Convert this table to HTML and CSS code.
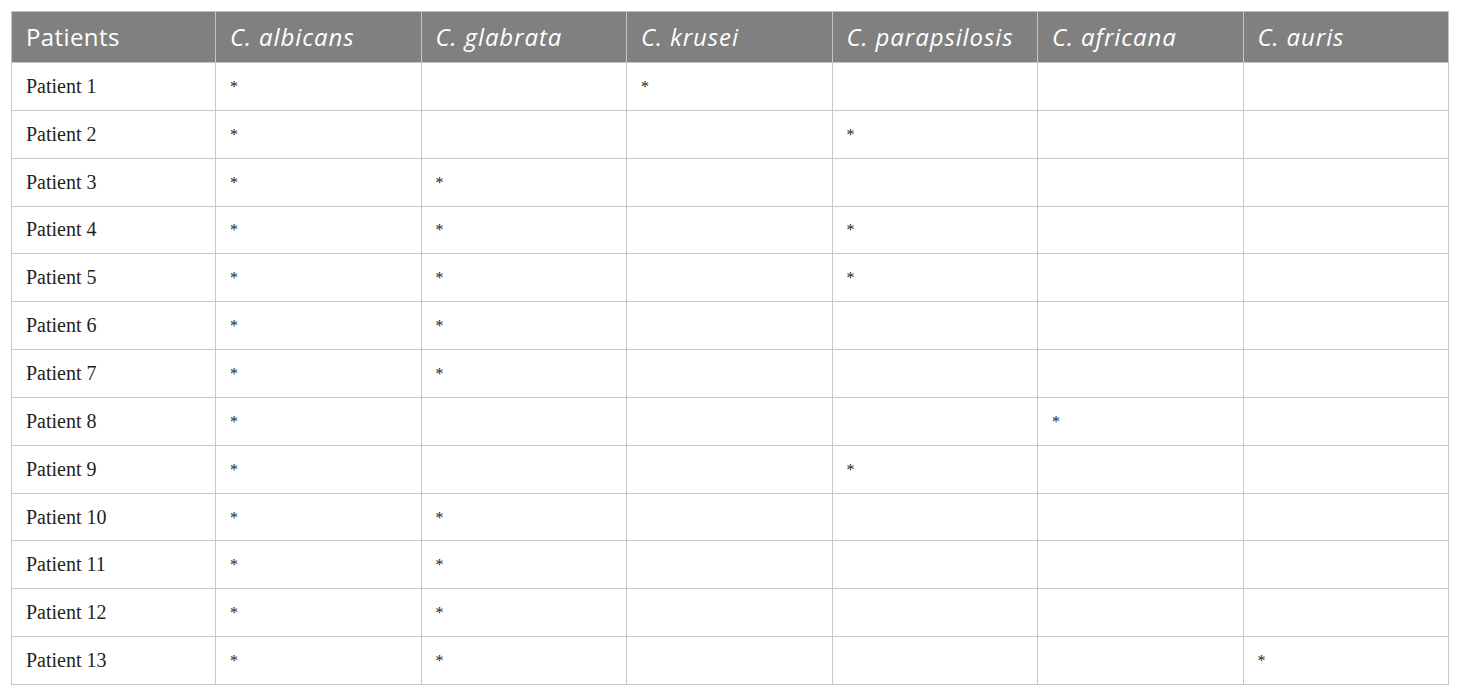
FILE: index.html
```html
<!DOCTYPE html>
<html>
<head>
<meta charset="utf-8">
<link rel="stylesheet" href="styles.css">
</head>
<body>
<table class="tbl">
<colgroup>
<col class="c1"><col class="c"><col class="c"><col class="c"><col class="c"><col class="c"><col class="c">
</colgroup>
<thead>
<tr><th>Patients</th><th><i>C. albicans</i></th><th><i>C. glabrata</i></th><th><i>C. krusei</i></th><th><i>C. parapsilosis</i></th><th><i>C. africana</i></th><th><i>C. auris</i></th></tr>
</thead>
<tbody>
<tr><td>Patient 1</td><td><span class="s">*</span></td><td></td><td><span class="s">*</span></td><td></td><td></td><td></td></tr>
<tr><td>Patient 2</td><td><span class="s">*</span></td><td></td><td></td><td><span class="s">*</span></td><td></td><td></td></tr>
<tr><td>Patient 3</td><td><span class="s">*</span></td><td><span class="s">*</span></td><td></td><td></td><td></td><td></td></tr>
<tr><td>Patient 4</td><td><span class="s">*</span></td><td><span class="s">*</span></td><td></td><td><span class="s">*</span></td><td></td><td></td></tr>
<tr><td>Patient 5</td><td><span class="s">*</span></td><td><span class="s">*</span></td><td></td><td><span class="s">*</span></td><td></td><td></td></tr>
<tr><td>Patient 6</td><td><span class="s">*</span></td><td><span class="s">*</span></td><td></td><td></td><td></td><td></td></tr>
<tr><td>Patient 7</td><td><span class="s">*</span></td><td><span class="s">*</span></td><td></td><td></td><td></td><td></td></tr>
<tr><td>Patient 8</td><td><span class="s">*</span></td><td></td><td></td><td></td><td><span class="s">*</span></td><td></td></tr>
<tr><td>Patient 9</td><td><span class="s">*</span></td><td></td><td></td><td><span class="s">*</span></td><td></td><td></td></tr>
<tr><td>Patient 10</td><td><span class="s">*</span></td><td><span class="s">*</span></td><td></td><td></td><td></td><td></td></tr>
<tr><td>Patient 11</td><td><span class="s">*</span></td><td><span class="s">*</span></td><td></td><td></td><td></td><td></td></tr>
<tr><td>Patient 12</td><td><span class="s">*</span></td><td><span class="s">*</span></td><td></td><td></td><td></td><td></td></tr>
<tr><td>Patient 13</td><td><span class="s">*</span></td><td><span class="s">*</span></td><td></td><td></td><td></td><td><span class="s">*</span></td></tr>
</tbody>
</table>
</body>
</html>
```
FILE: styles.css
```css
html, body {
  margin: 0;
  padding: 0;
  background: #ffffff;
}
body {
  padding: 11px 0 0 11px;
}
.tbl {
  border-collapse: collapse;
  width: 1438px;
  table-layout: fixed;
}
.c1 { width: 204px; }
.tbl th {
  background: #808080;
  color: #ffffff;
  font-family: "Open Sans", "Noto Sans", sans-serif;
  font-weight: 400;
  font-size: 24px;
  letter-spacing: 0.4px;
  text-align: left;
  height: 51px;
  padding: 0 14px 2px;
  border: 1px solid #c4c4c4;
  box-sizing: border-box;
  vertical-align: middle;
}
.tbl th i {
  font-style: italic;
  letter-spacing: 0.9px;
}
.tbl td {
  font-family: "Liberation Serif", "Times New Roman", serif;
  font-size: 20px;
  color: #231f20;
  height: 47.85px;
  padding: 0 14px;
  border: 1px solid #c8c8c8;
  vertical-align: middle;
  box-sizing: border-box;
}
.s {
  font-size: 16px;
  vertical-align: 1px;
}
```
